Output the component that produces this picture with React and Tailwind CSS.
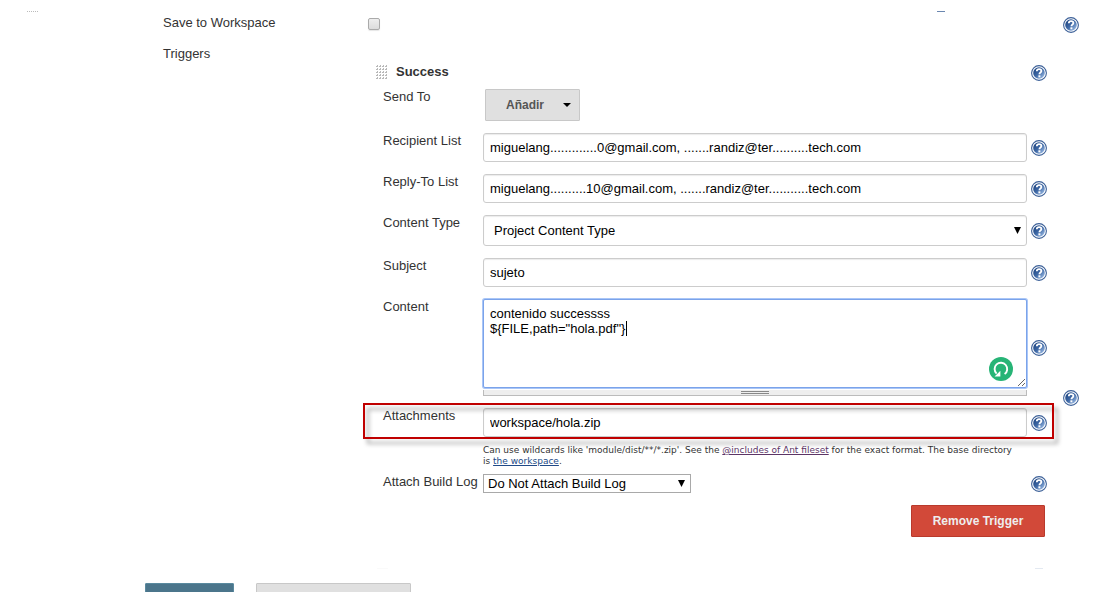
import { useId } from 'react'
import clsx from 'clsx'

const FILESET_URL = '#fileset'
const WORKSPACE_URL = '#workspace'

function HelpButton({ topic, className }) {
  const id = useId()
  return (
    <button type="button" aria-label={`Help: ${topic}`} className={clsx('block size-4 shrink-0 cursor-pointer', className)}>
      <svg viewBox="0 0 16 16" className="block size-4">
        <defs>
          <linearGradient id={id} x1="0" y1="0" x2="1" y2="1">
            <stop offset="0.1" stopColor="#1d4480" />
            <stop offset="0.5" stopColor="#3f69a6" />
            <stop offset="0.85" stopColor="#8fb0dc" />
          </linearGradient>
        </defs>
        <circle cx="8" cy="8" r="7.4" fill="#fff" stroke="#3c6098" strokeWidth="1.1" />
        <circle cx="8" cy="8" r="5.8" fill={`url(#${id})`} />
        <path d="M5.8 6.3C5.8 4.8 6.8 4.1 8.1 4.1s2.3.7 2.3 1.9c0 1.5-2 1.5-2 3.2" fill="none" stroke="#fff" strokeWidth="1.8" />
        <rect x="7.4" y="10.3" width="2" height="2" fill="#fff" />
      </svg>
    </button>
  )
}

function DragHandle() {
  return (
    <svg viewBox="0 0 12 14" className="block h-3.5 w-3 shrink-0 cursor-move">
      {[0, 3, 6, 9].map(x => [0, 3, 6, 9, 12].map(y => (
        <path key={`${x}-${y}`} d={`M${x} ${y + 1}h1v-1h1v2h-2z`} fill="#b8b8b8" />
      )))}
    </svg>
  )
}

function Arrow({ className }) {
  return (
    <svg viewBox="0 0 7 7" className={clsx('pointer-events-none absolute size-[7px]', className)}>
      <path d="M0 0h7L3.5 7z" fill="#000" />
    </svg>
  )
}

function Field({ id, label, help, className = 'mb-3', children }) {
  return (
    <div className={clsx('flex', className)}>
      <label htmlFor={id} className="w-[100px] shrink-0 whitespace-nowrap">{label}</label>
      <div className="min-w-0 flex-1">{children}</div>
      <div className="ml-1 flex w-4 shrink-0 items-center">
        {help && <HelpButton topic={label} />}
      </div>
    </div>
  )
}

function TextBox({ id, value }) {
  return (
    <input
      id={id}
      type="text"
      defaultValue={value}
      className="block h-[29px] w-full rounded-[3px] border border-[#ccc] bg-white px-1.5 text-black shadow-[inset_0_1px_1px_rgba(0,0,0,0.08)] outline-none"
    />
  )
}

function ContentBox() {
  return (
    <div className="relative">
      <textarea
        id="content"
        defaultValue={'contenido successss\n${FILE,path="hola.pdf"}'}
        spellCheck={false}
        className="block h-[89px] w-full resize rounded-[2px] border border-[#7ba3ea] bg-white p-1.5 text-black ring-1 ring-[#a9c6f7] outline-none"
      />
      <span className="pointer-events-none absolute top-[22px] left-[143px] h-[15px] w-px bg-black" />
      <svg viewBox="0 0 24 24" className="pointer-events-none absolute right-3.5 bottom-[7px] size-6">
        <circle cx="12" cy="12" r="12" fill="#27b476" />
        <path d="M15.6 17.1A6.3 6.3 0 1 0 7.6 16.6" fill="none" stroke="#fff" strokeWidth="1.9" />
        <path d="M11.4 13.8v5.8H5.6z" fill="#fff" />
      </svg>
    </div>
  )
}

function Trigger() {
  return (
    <div className="pt-[19px]">
      <div className="mb-2 flex items-start pl-[9px]">
        <DragHandle />
        <b className="ml-2 flex-1 leading-[13px]">Success</b>
        <HelpButton topic="Success" />
      </div>

      <div className="pl-4">
        <Field id="send-to" label="Send To">
          <button id="send-to" type="button" className="ml-0.5 flex h-8 w-[95px] items-center justify-between rounded-[1px] border border-[#c8c8c8] bg-[#e0e0e0] pr-2 pl-5 text-xs font-bold text-[#555]">
            Añadir
            <svg viewBox="0 0 8 4" className="h-1 w-2"><path d="M0 0h8L4 4z" fill="#000" /></svg>
          </button>
        </Field>
        <Field id="recipients" label="Recipient List" help>
          <TextBox id="recipients" value="miguelang.............0@gmail.com, .......randiz@ter..........tech.com" />
        </Field>
        <Field id="reply-to" label="Reply-To List" help>
          <TextBox id="reply-to" value="miguelang..........10@gmail.com, .......randiz@ter...........tech.com" />
        </Field>
        <Field id="content-type" label="Content Type" help>
          <div className="relative">
            <select id="content-type" className="block h-[31px] w-full appearance-none rounded-[3px] border border-[#ccc] bg-white px-2.5 text-black shadow-[inset_0_1px_1px_rgba(0,0,0,0.08)]">
              <option>Project Content Type</option>
            </select>
            <Arrow className="top-3 right-1.5" />
          </div>
        </Field>
        <Field id="subject" label="Subject" help>
          <TextBox id="subject" value="sujeto" />
        </Field>
        <Field id="content" label="Content" help>
          <ContentBox />
          {/* drag bar under the text area */}
          <div className="mt-0.5 flex h-1.5 justify-center border-r border-b border-l border-[#bbb] bg-[#eee]">
            <div className="mt-px h-[3px] w-7 border-y border-[#888]" />
          </div>
        </Field>

        <div className="relative">
          <Field id="attachments" label="Attachments" help className="">
            <TextBox id="attachments" value="workspace/hola.zip" />
          </Field>
          <div className="pointer-events-none absolute -top-[5px] -right-[7px] -bottom-0.5 -left-5 border-2 border-[#c00000] drop-shadow-[4px_5px_2px_rgba(0,0,0,0.35)]" />
        </div>
        <p className="mt-2 mr-5 mb-[7px] ml-[100px] font-['DejaVu_Sans',sans-serif] text-[9px] leading-[11px]">
          Can use wildcards like 'module/dist/**/*.zip'. See the{' '}
          <a href={FILESET_URL} className="text-[#5c3566] underline">@includes of Ant fileset</a>
          {' '}for the exact format. The base directory
          <br />
          is{' '}
          <a href={WORKSPACE_URL} className="text-[#204a87] underline">the workspace</a>.
        </p>

        <Field id="build-log" label="Attach Build Log" help>
          <div className="relative w-[208px]">
            <select id="build-log" className="block h-[19px] w-full appearance-none border border-[#a9a9a9] bg-white px-1 text-black">
              <option>Do Not Attach Build Log</option>
            </select>
            <Arrow className="top-1.5 right-1.5" />
          </div>
        </Field>
      </div>

      <div className="flex justify-end pr-0.5">
        <button type="button" className="h-8 w-[134px] rounded-[1px] border border-[#b93a2c] bg-[#d24939] text-xs font-bold text-[#eee]">
          Remove Trigger
        </button>
      </div>
    </div>
  )
}

export default function App() {
  return (
    <div className="flex h-screen flex-col overflow-hidden bg-white font-['Liberation_Sans',Arial,sans-serif] text-[13px] leading-[15px] text-[#333]">
      {/* bottom edge of the block scrolled out above */}
      <div className="mb-[3px] flex h-3 shrink-0 items-end justify-between pr-[149px] pl-[27px]">
        <div className="w-[11px] border-b border-dotted border-[#bbb]" />
        <div className="h-px w-2 bg-[#6b87b0]" />
      </div>

      <div className="flex h-[31px] shrink-0 items-start pr-[15px] pl-[163px]">
        <label htmlFor="save-ws" className="w-[204px]">Save to Workspace</label>
        <div className="flex-1">
          <input
            id="save-ws"
            type="checkbox"
            className="mt-[3px] ml-px block size-3 appearance-none rounded-[2px] border border-[#aaa] bg-linear-to-b from-[#eee] to-[#dcdcdc] shadow-[0_1px_1px_rgba(0,0,0,0.1)]"
          />
        </div>
        <HelpButton topic="Save to Workspace" className="mt-0.5" />
      </div>

      <div className="flex shrink-0 items-start pr-[15px] pl-[163px]">
        <div className="w-[204px]">Triggers</div>
        <div className="min-w-0 flex-1"><Trigger /></div>
        <HelpButton topic="Triggers" className="mt-86 ml-4" />
      </div>

      {/* next trigger, faded out behind the button bar */}
      <div className="mt-[31px] mb-3.5 flex h-px shrink-0 justify-between pr-[51px] pl-[377px]">
        <div className="w-[11px] bg-[#fafafa]" />
        <div className="w-2 bg-[#e3e9f1]" />
      </div>

      <div className="flex shrink-0 gap-[22px] pl-[145px]">
        <button type="button" aria-label="Guardar" className="h-8 w-[89px] rounded-[1px] border border-[#5a8a9f] bg-[#4b758b]" />
        <button type="button" aria-label="Apply" className="h-8 w-[155px] rounded-[1px] border border-[#c8c8c8] bg-[#e0e0e0]" />
      </div>
    </div>
  )
}
